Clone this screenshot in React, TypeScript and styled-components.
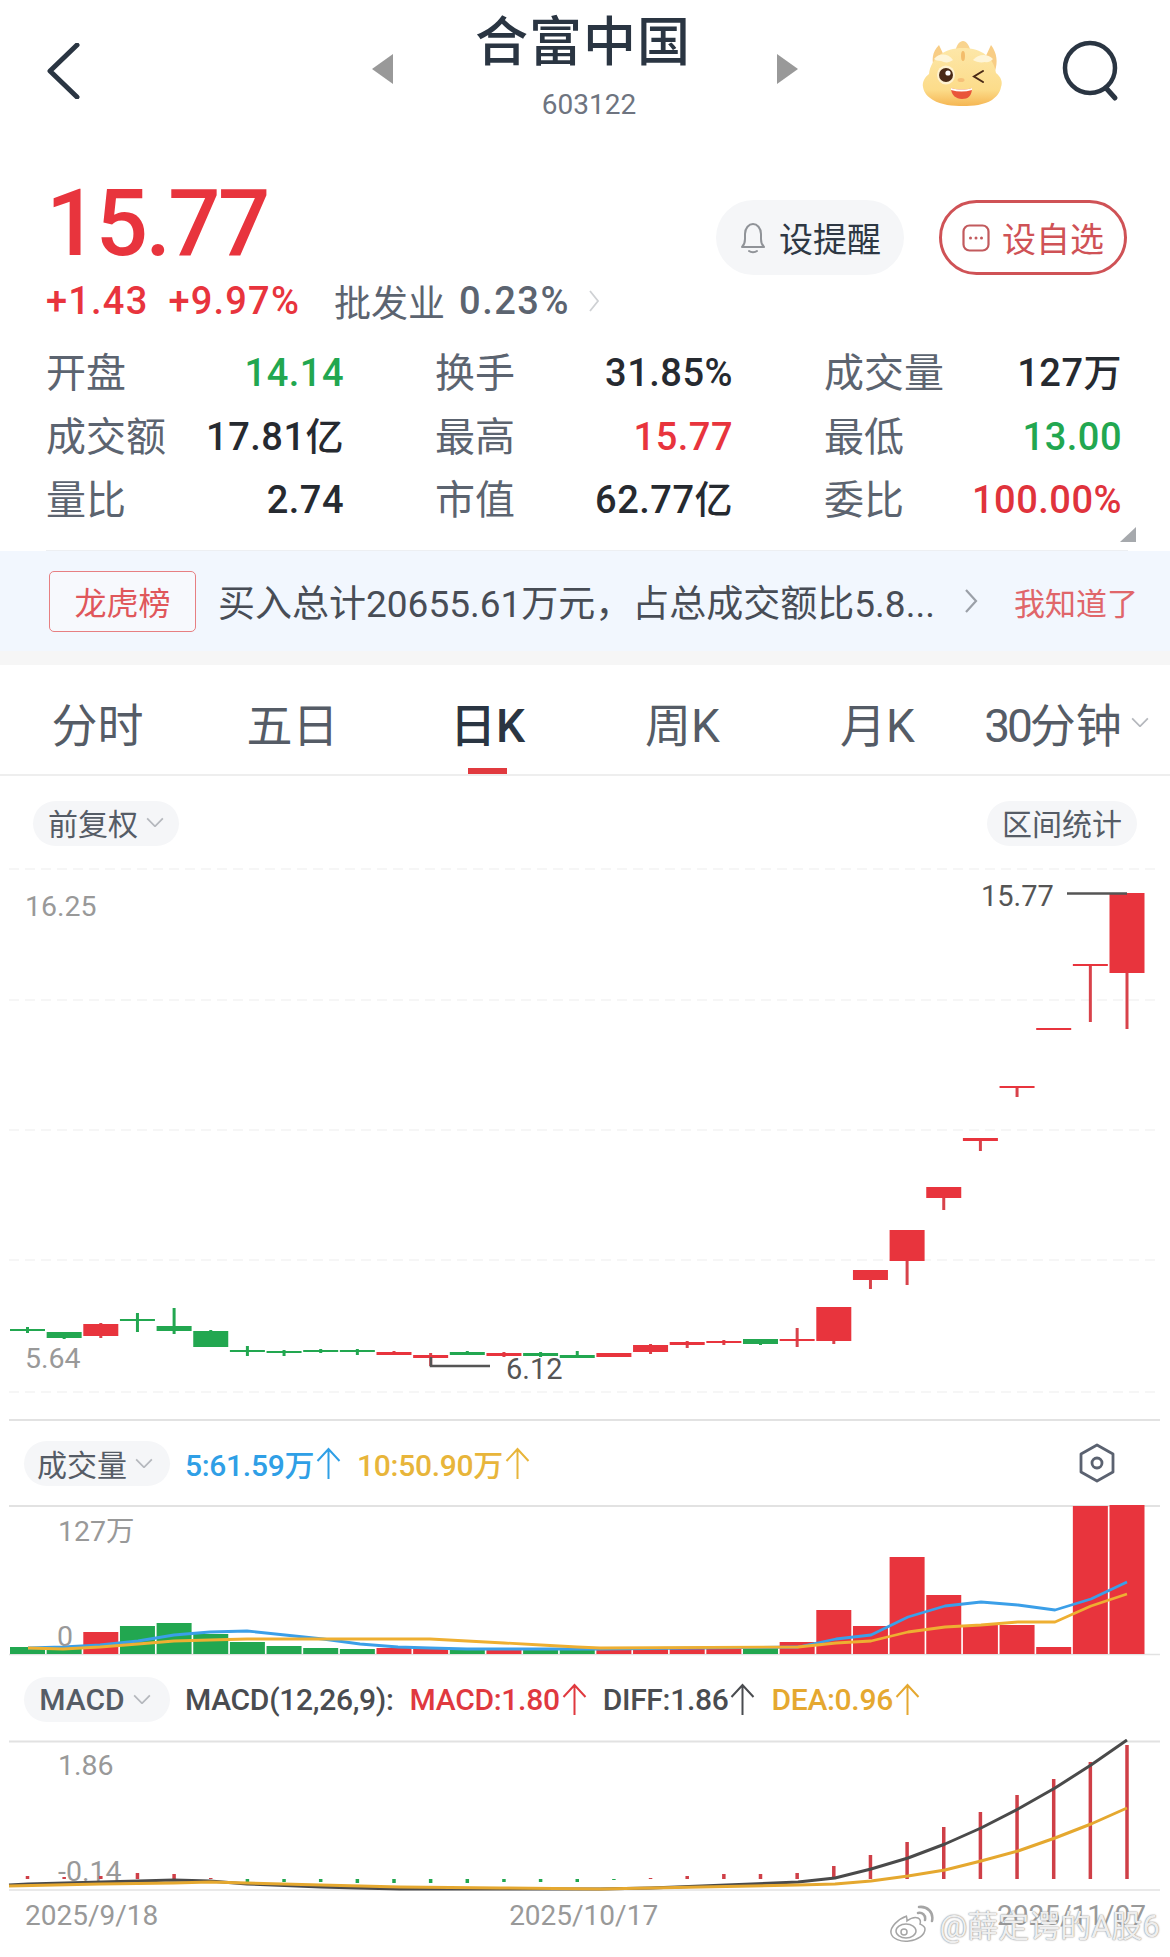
import React from "react";
import styled, { createGlobalStyle } from "styled-components";

const RED = "#e8343d";
const GREEN = "#22a750";
const BLUE = "#2f9fe6";
const ORANGE = "#e8b53a";
const DARK = "#4a4c50";

const GlobalStyle = createGlobalStyle`
  html, body {
    margin: 0;
    padding: 0;
    background: #fff;
  }
  body {
    font-family: Roboto, "Noto Sans CJK SC", sans-serif;
    color: #262a30;
  }
  * {
    box-sizing: border-box;
  }
`;

const Page = styled.div`
  position: relative;
  width: 1170px;
  height: 1957px;
  overflow: hidden;
  background: #fff;
`;

/* header */
const Header = styled.header`
  display: grid;
  grid-template-columns: 1fr 426px 1fr;
  height: 130px;
`;

const BackCell = styled.div`
  padding: 43px 0 0 46px;
`;

const TitleCell = styled.div`
  display: flex;
  align-items: flex-start;
  justify-content: space-between;
`;

const Triangle = styled.div<{ $dir: "left" | "right" }>`
  width: 0;
  height: 0;
  margin-top: 54px;
  border-top: 15px solid transparent;
  border-bottom: 15px solid transparent;
  ${(p) => (p.$dir === "left" ? "border-right: 21px solid #999;" : "border-left: 21px solid #999;")}
`;

const TitleBlock = styled.div`
  display: flex;
  flex-direction: column;
  align-items: center;
  padding: 13px 4px 0 0;
`;

const Title = styled.div`
  font-size: 53px;
  line-height: 60px;
  font-weight: 500;
  color: #2a3542;
  letter-spacing: 1px;
`;

const Code = styled.div`
  font-size: 28px;
  line-height: 40px;
  margin: 12px 0 0 12px;
  color: #6e7480;
`;

const RightCell = styled.div`
  display: flex;
  justify-content: flex-end;
  gap: 52px;
  padding: 32px 50px 0 0;
`;

/* price */
const PriceRow = styled.section`
  display: flex;
  justify-content: space-between;
  height: 210px;
  padding: 0 43px 0 46px;
`;

const PriceCol = styled.div`
  padding-top: 48px;
`;

const Price = styled.div`
  font-size: 92px;
  line-height: 92px;
  font-weight: 500;
  color: ${RED};
  letter-spacing: -2.6px;
`;

const ChangeRow = styled.div`
  display: flex;
  align-items: center;
  height: 50px;
  margin-top: 6px;
`;

const Change = styled.span`
  font-size: 38px;
  font-weight: 500;
  color: ${RED};
  margin-right: 20px;
  letter-spacing: 1.2px;
`;

const SectorName = styled.span`
  font-size: 37px;
  color: #5c6470;
  margin: 0 14px 0 14px;
`;

const SectorValue = styled.span`
  font-size: 38px;
  font-weight: 500;
  color: #5c6470;
  letter-spacing: 1.5px;
`;

const ButtonRow = styled.div`
  display: flex;
  gap: 35px;
  padding-top: 70px;
`;

const ActionButton = styled.div<{ $outlined?: boolean }>`
  display: flex;
  align-items: center;
  justify-content: center;
  gap: 12px;
  width: 188px;
  height: 75px;
  border-radius: 38px;
  font-size: 34px;
  color: ${(p) => (p.$outlined ? "#cf5256" : "#2e3844")};
  background: ${(p) => (p.$outlined ? "#fff" : "#f5f6f8")};
  border: ${(p) => (p.$outlined ? "3px solid #cf5256" : "none")};
`;

/* stats */
const Stats = styled.section`
  position: relative;
  display: grid;
  grid-template-columns: repeat(3, 298px);
  column-gap: 91px;
  grid-auto-rows: 63.5px;
  height: 211px;
  margin: 0 42px 0 46px;
  padding-bottom: 20px;
  border-bottom: 1px solid #edeff2;
`;

const Stat = styled.div`
  display: flex;
  align-items: center;
  justify-content: space-between;
`;

const StatLabel = styled.span`
  font-size: 40px;
  padding-bottom: 3px;
  color: #5c6470;
`;

const StatValue = styled.span<{ $color?: string }>`
  padding-top: 3px;
  font-size: 38px;
  line-height: 50px;
  font-weight: 500;
  letter-spacing: 0.5px;
  color: ${(p) => p.$color ?? "#262a30"};
`;

const CornerMark = styled.div`
  position: absolute;
  right: -8px;
  bottom: 8px;
  width: 0;
  height: 0;
  border-left: 16px solid transparent;
  border-bottom: 15px solid #a6a9ad;
`;

/* banner */
const Banner = styled.section`
  display: flex;
  align-items: center;
  height: 114px;
  padding: 0 32px 0 49px;
  background: #f2f7fe;
  border-bottom: 14px solid #f6f6f6;
`;

const BannerTag = styled.div`
  display: flex;
  align-items: center;
  justify-content: center;
  width: 147px;
  height: 61px;
  border: 1.5px solid #e77f82;
  border-radius: 5px;
  font-size: 32px;
  color: #e0575b;
  background: #f7f9fd;
`;

const BannerText = styled.div`
  flex: 1;
  margin-left: 22px;
  font-size: 37px;
  color: #484d56;
  white-space: nowrap;
`;

const BannerDismiss = styled.div`
  font-size: 31px;
  color: #e0666a;
  white-space: nowrap;
  margin-left: 36px;
`;

/* period tabs */
const Tabs = styled.nav`
  display: grid;
  grid-template-columns: repeat(6, 195px);
  height: 111px;
  border-bottom: 2px solid #eeeeee;
`;

const Tab = styled.div<{ $active?: boolean }>`
  position: relative;
  display: flex;
  align-items: center;
  justify-content: center;
  gap: 12px;
  padding-top: 5px;
  font-size: 46px;
  font-weight: ${(p) => (p.$active ? 500 : 400)};
  color: ${(p) => (p.$active ? "#2a3542" : "#555c66")};
  white-space: nowrap;
`;

const MinuteTab = styled(Tab)`
  gap: 9px;
  padding-right: 12px;
`;

const TabDigits = styled.span`
  letter-spacing: -3px;
`;

const TabMark = styled.div`
  position: absolute;
  left: 78px;
  bottom: 0;
  width: 39px;
  height: 6px;
  background: #e13a3f;
`;

/* pills */
const Toolbar = styled.div`
  display: flex;
  align-items: flex-start;
  justify-content: space-between;
  height: 81px;
  padding: 25px 33px 0;
`;

const Pill = styled.div`
  display: flex;
  align-items: center;
  justify-content: center;
  gap: 8px;
  height: 45px;
  padding: 0 15px 3px;
  border-radius: 23px;
  background: #f5f6f8;
  font-size: 30px;
  color: #555c66;
`;

const IndicatorBar = styled.div`
  display: flex;
  align-items: center;
  height: 84px;
  margin: 0 10px 0 9px;
  padding: 0 45px 0 15px;
`;

const MacdBar = styled(IndicatorBar)`
  height: 80px;
`;

const WidePill = styled(Pill)<{ $heavy?: boolean }>`
  width: 146px;
  margin-right: 15px;
  padding: 0 4px 0 0;
  font-weight: ${(p) => (p.$heavy ? 500 : 400)};
`;

const Reading = styled.span<{ $color: string }>`
  display: inline-flex;
  align-items: center;
  gap: 2px;
  margin-right: 16px;
  font-size: 30px;
  font-weight: 500;
  letter-spacing: -0.3px;
  color: ${(p) => p.$color};
  white-space: nowrap;
`;

const SettingsSlot = styled.div`
  margin-left: auto;
  display: flex;
`;

const ChartSvg = styled.svg`
  display: block;
`;

const AxisText = styled.text`
  font-family: Roboto, "Noto Sans CJK SC", sans-serif;
  font-size: 28.500px;
  fill: #999;
`;

const MarkText = styled.text`
  font-family: Roboto, sans-serif;
  font-size: 29px;
  fill: #555;
`;

/* bottom */
const DateAxis = styled.div`
  display: flex;
  justify-content: space-between;
  padding: 8px 24px 0 25px;
  font-size: 28px;
  color: #999;
`;

const MiddleDate = styled.span`
  margin-left: 12px;
`;

const Watermark = styled.div`
  position: absolute;
  right: 10px;
  bottom: 11px;
  display: flex;
  align-items: center;
  gap: 5px;
  font-size: 31px;
  color: rgba(255, 255, 255, 0.85);
  text-shadow: 0 0 2px #9a9a9a, 0 0 1px #8a8a8a;
`;

const cx = (i: number) => 27.5 + i * 36.65;

// top, bottom, wick high, wick low, rising
type Candle = [number, number, number, number, boolean];

const candles: Candle[] = [
  [1330, 1332, 1328, 1334, false],
  [1333, 1339, 1333, 1340, false],
  [1325, 1337, 1324, 1339, true],
  [1320, 1322, 1314, 1333, false],
  [1327, 1332, 1309, 1335, false],
  [1332, 1348, 1331, 1348, false],
  [1351, 1353, 1347, 1357, false],
  [1352, 1354, 1351, 1357, false],
  [1351, 1353, 1350, 1354, false],
  [1351, 1353, 1350, 1356, false],
  [1353, 1356, 1352, 1356, true],
  [1356, 1359, 1354, 1367, true],
  [1353, 1356, 1352, 1356, false],
  [1354, 1357, 1353, 1358, true],
  [1354, 1357, 1353, 1358, false],
  [1356, 1359, 1352, 1359, false],
  [1354, 1358, 1354, 1358, true],
  [1346, 1353, 1345, 1355, true],
  [1343, 1346, 1342, 1349, true],
  [1342, 1344, 1341, 1346, true],
  [1340, 1345, 1340, 1346, false],
  [1340, 1342, 1329, 1348, true],
  [1308, 1342, 1308, 1345, true],
  [1271, 1281, 1271, 1290, true],
  [1231, 1262, 1231, 1286, true],
  [1188, 1199, 1188, 1211, true],
  [1139, 1142, 1139, 1152, true],
  [1087, 1089, 1087, 1098, true],
  [1029, 1031, 1029, 1031, true],
  [965, 967, 965, 1023, true],
  [894, 974, 894, 1030, true],
];

const volumes: [number, boolean][] = [
  [1648, false], [1650, false], [1633, true], [1627, false], [1624, false], [1635, false],
  [1643, false], [1647, false], [1649, false], [1650, false], [1649, true], [1649, true],
  [1649, false], [1651, true], [1650, false], [1651, false], [1650, true], [1648, true],
  [1648, true], [1648, true], [1648, false], [1643, true], [1611, true], [1627, true],
  [1558, true], [1596, true], [1626, true], [1626, true], [1648, true], [1507, true], [1505, true],
];

const ma5 =
  "28,1649 63,1648 100,1646 138,1642 174,1636 210,1633 247,1632 285,1636 323,1640 360,1645 398,1648 430,1649 467,1650 600,1650 798,1648 836,1640 871,1636 908,1618 945,1607 981,1603 1018,1606 1055,1611 1091,1600 1127,1583";
const ma10 =
  "28,1649 63,1650 100,1648 138,1645 174,1642 210,1641 247,1640 285,1640 323,1640 360,1640 398,1640 430,1640 467,1642 504,1644 541,1646 577,1648 600,1649 798,1648 836,1644 871,1642 908,1633 945,1628 981,1626 1018,1623 1055,1623 1091,1607 1127,1595";
const diff =
  "9,1884 28,1883 138,1880 174,1879 210,1880 247,1883 321,1886 357,1887 400,1888 600,1888 651,1887 798,1881 835,1877 871,1868 908,1857 945,1843 981,1827 1018,1808 1055,1787 1091,1764 1127,1739";
const dea =
  "9,1885 100,1883 174,1882 210,1881 247,1882 321,1884 400,1886 500,1887 600,1888 798,1884 835,1883 871,1880 908,1875 945,1869 981,1860 1018,1850 1055,1837 1091,1823 1127,1807";

// top (or bottom for negative) of each MACD column, zero line at 1878
const macdBars = [
  1875, 1876, 1875, 1872, 1873, 1877, 1881, 1881, 1881, 1882, 1882, 1882, 1882, 1881, 1881, 1881,
  1879, 1877, 1875, 1873, 1873, 1872, 1865, 1854, 1841, 1826, 1811, 1794, 1778, 1761, 1744,
];

const Chevron = ({ size = 18, color = "#b5b8bd" }: { size?: number; color?: string }) => (
  <svg width={size} height={size * 0.6} viewBox="0 0 18 11" fill="none">
    <path d="M1 1.5 9 9.5 17 1.5" stroke={color} strokeWidth="1.8" />
  </svg>
);

const UpArrow = () => (
  <svg width="25" height="34" viewBox="0 0 25 34" fill="none" stroke="currentColor" strokeWidth="2">
    <path d="M12.500 33V3M1.500 15 12.500 3 23.500 15" />
  </svg>
);

const Mascot = () => (
  <svg width="90" height="80" viewBox="0 0 90 80">
    <defs>
      <linearGradient id="mascotBody" x1="0" y1="0" x2="0" y2="1">
        <stop offset="0" stopColor="#fde7a8" />
        <stop offset="0.72" stopColor="#fcdc8a" />
        <stop offset="1" stopColor="#f5b653" />
      </linearGradient>
    </defs>
    <path d="M21 13c-7 7-8 16-4 25l11-10zM73 13c6 8 7 17 4 26l-11-11z" fill="#f8cd85" />
    <path d="M37 22c1-10 5-13 8-13s7 4 8 13z" fill="#f9d48e" />
    <path
      d="M45 16c19 0 31 10 33 25 5 4 7 9 5 14-1 6-5 10-9 13-8 5-19 6-29 6s-22-1-30-6c-5-3-9-7-10-13-1-5 2-10 6-13 2-16 15-26 34-26z"
      fill="url(#mascotBody)"
    />
    <path d="M16 27c5-6 14-6 19 1-4 3-8 3-12 1-3 0-6-1-7-2zM55 28c6-7 15-6 20-1-2 2-5 4-8 3-4 1-9 0-12-2z" fill="#fef5d8" />
    <ellipse cx="45" cy="24" rx="2" ry="5" fill="#f3bd6b" />
    <ellipse cx="28" cy="43" rx="9" ry="9.500" fill="#fff2cf" />
    <circle cx="28" cy="43" r="7" fill="#4a2a17" />
    <circle cx="30" cy="41" r="2.600" fill="#fff" />
    <path d="M65 39 56 44.500 65 50" fill="none" stroke="#4a2a17" strokeWidth="2" strokeLinecap="round" />
    <ellipse cx="43" cy="48" rx="3.500" ry="2" fill="#f6c078" />
    <path d="M33 56c7 2 15 2 21 0 0 8-4 11-10 11s-11-4-11-11z" fill="#e9553a" />
    <path d="M33 56c7 2 15 2 21 0v2c-7 2-14 2-21 0z" fill="#fff" />
  </svg>
);

const WeiboLogo = () => (
  <svg width="46" height="38" viewBox="0 0 46 38" fill="rgba(255,255,255,0.85)" stroke="#a5a5a5" strokeWidth="1.5">
    <path d="M18 11C9 14 1 22 2 28c1 6 10 9 18 8 9-1 16-6 16-12 0-3-3-4-5-5 1-3 0-5-2-6-3-1-7 0-11 3 0-4-1-5 0-5z" />
    <ellipse cx="17" cy="26" rx="10" ry="7" />
    <circle cx="15" cy="27" r="3" />
    <path d="M29 8c4-1 8 2 7 7M30 2c8-1 15 5 13 14" fill="none" strokeWidth="2.500" strokeLinecap="round" />
  </svg>
);

type StatItem = { label: string; value: string; color?: string };

const stats: StatItem[] = [
  { label: "开盘", value: "14.14", color: GREEN },
  { label: "换手", value: "31.85%" },
  { label: "成交量", value: "127万" },
  { label: "成交额", value: "17.81亿" },
  { label: "最高", value: "15.77", color: RED },
  { label: "最低", value: "13.00", color: GREEN },
  { label: "量比", value: "2.74" },
  { label: "市值", value: "62.77亿" },
  { label: "委比", value: "100.00%", color: "#e0333c" },
];

const periods = ["分时", "五日", "日K", "周K", "月K"];

const App = () => (
  <Page>
    <GlobalStyle />
    <Header>
      <BackCell>
        <svg width="34" height="56" viewBox="0 0 34 56" fill="none">
          <path d="M31 2 4 28 31 54" stroke="#2a3542" strokeWidth="5" strokeLinecap="round" strokeLinejoin="round" />
        </svg>
      </BackCell>
      <TitleCell>
        <Triangle $dir="left" />
        <TitleBlock>
          <Title>合富中国</Title>
          <Code>603122</Code>
        </TitleBlock>
        <Triangle $dir="right" />
      </TitleCell>
      <RightCell>
        <Mascot />
        <svg width="60" height="66" viewBox="0 0 60 66" fill="none" style={{ marginTop: 8 }}>
          <circle cx="30" cy="28" r="25" stroke="#2a3542" strokeWidth="4.5" />
          <path d="M46 48 55 58" stroke="#2a3542" strokeWidth="5" strokeLinecap="round" />
        </svg>
      </RightCell>
    </Header>

    <PriceRow>
      <PriceCol>
        <Price>15.77</Price>
        <ChangeRow>
          <Change>+1.43</Change>
          <Change>+9.97%</Change>
          <SectorName>批发业</SectorName>
          <SectorValue>0.23%</SectorValue>
          <svg width="12" height="24" viewBox="0 0 12 24" fill="none" style={{ marginLeft: 18 }}>
            <path d="M2 2 10 12 2 22" stroke="#cfd1d4" strokeWidth="1.8" />
          </svg>
        </ChangeRow>
      </PriceCol>
      <ButtonRow>
        <ActionButton>
          <svg width="28" height="32" viewBox="0 0 28 32" fill="none" stroke="#909398" strokeWidth="2">
            <path d="M3 25c2-2 3-4 3-8v-5C6 6 10 2 14 2s8 4 8 10v5c0 4 1 6 3 8z" strokeLinejoin="round" />
            <path d="M10 29c2 1.500 6 1.500 8 0" strokeLinecap="round" />
          </svg>
          设提醒
        </ActionButton>
        <ActionButton $outlined>
          <svg width="28" height="28" viewBox="0 0 28 28" fill="none">
            <rect x="1.500" y="1.500" width="25" height="25" rx="6" stroke="#c25a5d" strokeWidth="2.200" />
            <circle cx="8.500" cy="14" r="1.500" fill="#c25a5d" />
            <circle cx="14" cy="14" r="1.500" fill="#c25a5d" />
            <circle cx="19.500" cy="14" r="1.500" fill="#c25a5d" />
          </svg>
          设自选
        </ActionButton>
      </ButtonRow>
    </PriceRow>

    <Stats>
      {stats.map((s) => (
        <Stat key={s.label}>
          <StatLabel>{s.label}</StatLabel>
          <StatValue $color={s.color}>{s.value}</StatValue>
        </Stat>
      ))}
      <CornerMark />
    </Stats>

    <Banner>
      <BannerTag>龙虎榜</BannerTag>
      <BannerText>买入总计20655.61万元，占总成交额比5.8...</BannerText>
      <svg width="14" height="26" viewBox="0 0 14 26" fill="none">
        <path d="M2 2 12 13 2 24" stroke="#9ba0a8" strokeWidth="2.200" />
      </svg>
      <BannerDismiss>我知道了</BannerDismiss>
    </Banner>

    <Tabs>
      {periods.map((p) => (
        <Tab key={p} $active={p === "日K"}>
          {p}
          {p === "日K" && <TabMark />}
        </Tab>
      ))}
      <MinuteTab>
        <span>
          <TabDigits>30</TabDigits>分钟
        </span>
        <Chevron />
      </MinuteTab>
    </Tabs>

    <Toolbar>
      <Pill>
        前复权
        <Chevron />
      </Pill>
      <Pill>区间统计</Pill>
    </Toolbar>

    <ChartSvg width="1170" height="564" viewBox="0 858 1170 564">
      {[870, 1001, 1131, 1261, 1393].map((y) => (
        <line key={y} x1="9" x2="1160" y1={y} y2={y} stroke="#f4f4f4" strokeWidth="1.500" strokeDasharray="10 6" />
      ))}
      {candles.map(([top, bottom, hi, lo, up], i) => {
        const color = up ? RED : GREEN;
        return (
          <g key={i}>
            <line x1={cx(i)} x2={cx(i)} y1={hi} y2={lo} stroke={up ? "#d8424a" : color} strokeWidth="3" />
            <rect x={cx(i) - 17.500} y={top} width="35" height={bottom - top} fill={color} />
          </g>
        );
      })}
      <AxisText x="25" y="917">16.25</AxisText>
      <AxisText x="25" y="1369">5.64</AxisText>
      <line x1="1067" x2="1127" y1="894.500" y2="894.500" stroke="#555" strokeWidth="2.500" />
      <MarkText x="981" y="907">15.77</MarkText>
      <path d="M431 1358V1367H490" fill="none" stroke="#555" strokeWidth="2.500" />
      <MarkText x="506" y="1380">6.12</MarkText>
      <line x1="9" x2="1160" y1="1421" y2="1421" stroke="#e2e2e2" strokeWidth="2" />
    </ChartSvg>

    <IndicatorBar>
      <WidePill>
        成交量
        <Chevron />
      </WidePill>
      <Reading $color={BLUE}>
        5:61.59万
        <UpArrow />
      </Reading>
      <Reading $color={ORANGE}>
        10:50.90万
        <UpArrow />
      </Reading>
      <SettingsSlot>
        <svg width="36" height="40" viewBox="0 0 36 40" fill="none">
          <path d="M18 2 34 11V29L18 38 2 29V11z" stroke="#5b6270" strokeWidth="2.800" strokeLinejoin="round" />
          <circle cx="18" cy="20" r="5" stroke="#5b6270" strokeWidth="2.800" />
        </svg>
      </SettingsSlot>
    </IndicatorBar>

    <ChartSvg width="1170" height="154" viewBox="0 1506 1170 154">
      <line x1="9" x2="1160" y1="1507" y2="1507" stroke="#e2e2e2" strokeWidth="2" />
      <line x1="9" x2="1160" y1="1655.500" y2="1655.500" stroke="#e2e2e2" strokeWidth="1.500" />
      {volumes.map(([top, up], i) => (
        <rect key={i} x={cx(i) - 17.500} y={top} width="35" height={1655 - top} fill={up ? RED : GREEN} />
      ))}
      <polyline points={ma5} fill="none" stroke="#3b9fe8" strokeWidth="2.800" strokeLinejoin="round" />
      <polyline points={ma10} fill="none" stroke="#eeaf32" strokeWidth="2.800" strokeLinejoin="round" />
      <AxisText x="58" y="1542">127万</AxisText>
      <AxisText x="57" y="1647">0</AxisText>
    </ChartSvg>

    <MacdBar>
      <WidePill $heavy>
        MACD
        <Chevron />
      </WidePill>
      <Reading $color={DARK}>MACD(12,26,9):</Reading>
      <Reading $color="#e0393f">
        MACD:1.80
        <UpArrow />
      </Reading>
      <Reading $color={DARK}>
        DIFF:1.86
        <UpArrow />
      </Reading>
      <Reading $color="#e5a830">
        DEA:0.96
        <UpArrow />
      </Reading>
    </MacdBar>

    <ChartSvg width="1170" height="152" viewBox="0 1738 1170 152">
      <line x1="9" x2="1160" y1="1740.500" y2="1740.500" stroke="#e2e2e2" strokeWidth="2" />
      <line x1="9" x2="1160" y1="1889" y2="1889" stroke="#e2e2e2" strokeWidth="1.500" />
      <AxisText x="58" y="1774">1.86</AxisText>
      <AxisText x="58" y="1880">-0.14</AxisText>
      {macdBars.map((y, i) => (
        <rect
          key={i}
          x={cx(i) - 1.750}
          y={Math.min(y, 1878)}
          width="3.500"
          height={Math.abs(y - 1878)}
          fill={y <= 1878 ? "#cf3f47" : GREEN}
        />
      ))}
      <polyline points={diff} fill="none" stroke="#4a4a4a" strokeWidth="3" strokeLinejoin="round" />
      <polyline points={dea} fill="none" stroke="#e5a82f" strokeWidth="3" strokeLinejoin="round" />
    </ChartSvg>

    <DateAxis>
      <span>2025/9/18</span>
      <MiddleDate>2025/10/17</MiddleDate>
      <span>2025/11/07</span>
    </DateAxis>

    <Watermark>
      <WeiboLogo />
      @薛定谔的A股6
    </Watermark>
  </Page>
);

export default App;
